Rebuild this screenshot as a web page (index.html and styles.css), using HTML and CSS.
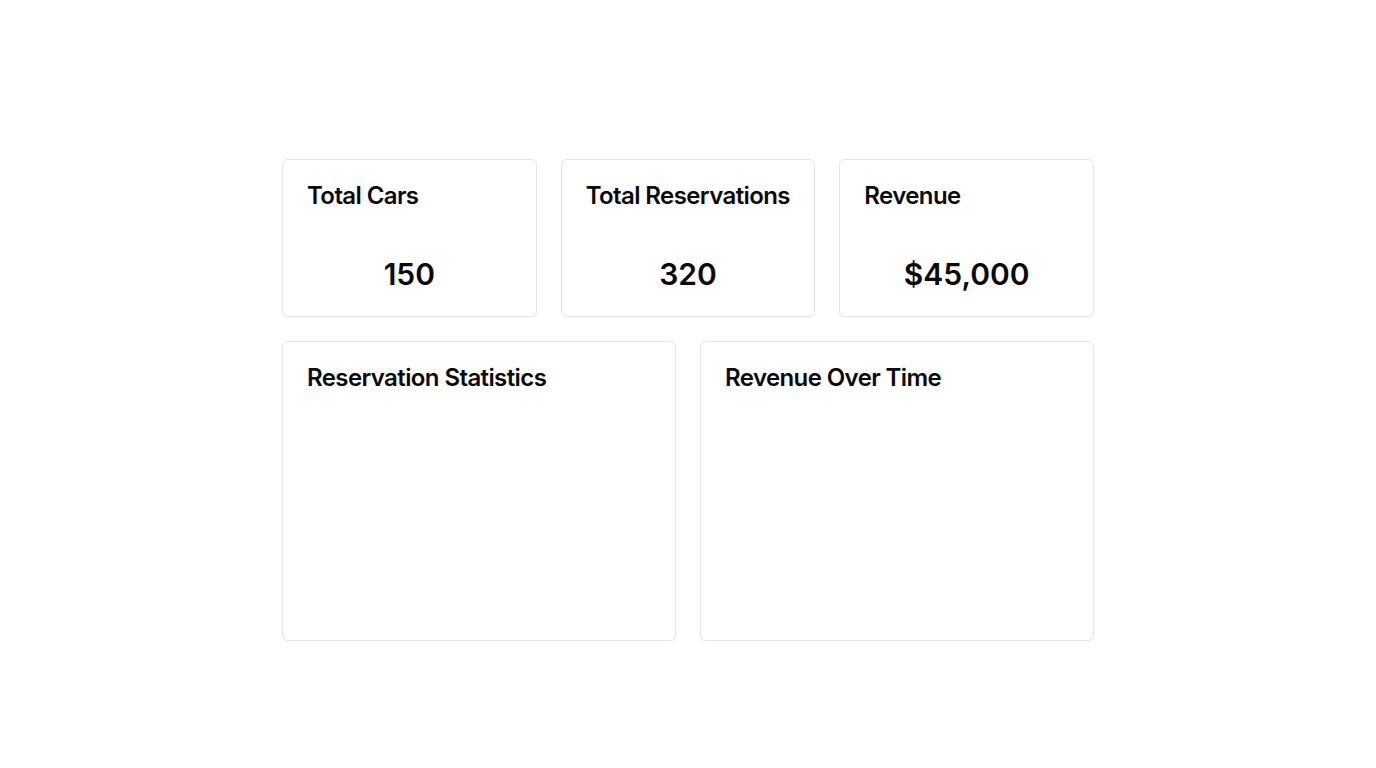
FILE: index.html
```html
<!DOCTYPE html>
<html lang="en">
<head>
<meta charset="utf-8">
<title>Dashboard</title>
<link rel="stylesheet" href="styles.css">
</head>
<body>
<main class="dashboard">
  <section class="stats">
    <div class="card stat-card">
      <h3 class="card-title">Total Cars</h3>
      <p class="stat-value">150</p>
    </div>
    <div class="card stat-card">
      <h3 class="card-title">Total Reservations</h3>
      <p class="stat-value">320</p>
    </div>
    <div class="card stat-card">
      <h3 class="card-title">Revenue</h3>
      <p class="stat-value">$45,000</p>
    </div>
  </section>
  <section class="charts">
    <div class="card chart-card">
      <h3 class="card-title">Reservation Statistics</h3>
    </div>
    <div class="card chart-card">
      <h3 class="card-title">Revenue Over Time</h3>
    </div>
  </section>
</main>
</body>
</html>
```
FILE: styles.css
```css
* { box-sizing: border-box; }
html, body { margin: 0; padding: 0; background: #ffffff; }
body {
  font-family: Inter, "Noto Sans", "Liberation Sans", sans-serif;
  color: #0a0a0a;
}
.dashboard {
  width: 812px;
  margin: 0 auto;
  padding-top: 159px;
  display: flex;
  flex-direction: column;
  gap: 24px;
}
.stats {
  display: grid;
  grid-template-columns: repeat(3, 1fr);
  gap: 24px;
}
.charts {
  display: grid;
  grid-template-columns: repeat(2, 1fr);
  gap: 24px;
}
.card {
  background: #ffffff;
  border: 1px solid #e5e5e5;
  border-radius: 6px;
  box-shadow: 0 1px 2px rgba(0, 0, 0, 0.04);
  padding: 24px;
}
.card-title {
  margin: 0;
  font-size: 24px;
  line-height: 24px;
  font-weight: 600;
  letter-spacing: -0.025em;
}
.stat-card {
  height: 158px;
  display: flex;
  flex-direction: column;
}
.stat-value {
  margin: auto 0 0;
  text-align: center;
  font-size: 30px;
  line-height: 36px;
  font-weight: 600;
}
.chart-card {
  height: 300px;
}
```
